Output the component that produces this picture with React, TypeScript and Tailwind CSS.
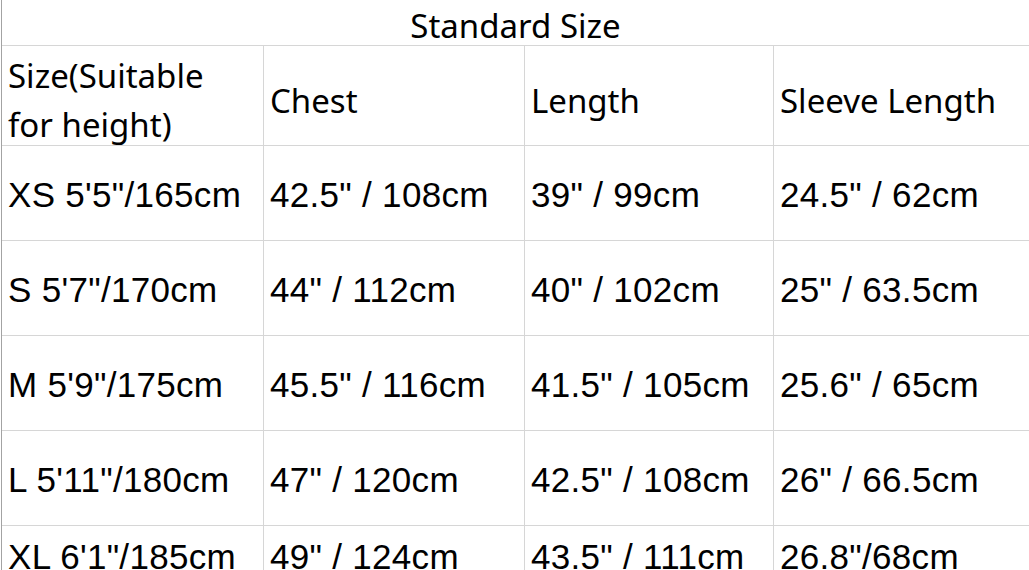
import React from 'react';

const headers = ['Chest', 'Length', 'Sleeve Length'];

const rows: string[][] = [
  ['XS 5\'5"/165cm', '42.5" / 108cm', '39" / 99cm', '24.5" / 62cm'],
  ['S 5\'7"/170cm', '44" / 112cm', '40" / 102cm', '25" / 63.5cm'],
  ['M 5\'9"/175cm', '45.5" / 116cm', '41.5" / 105cm', '25.6" / 65cm'],
  ['L 5\'11"/180cm', '47" / 120cm', '42.5" / 108cm', '26" / 66.5cm'],
  ['XL 6\'1"/185cm', '49" / 124cm', '43.5" / 111cm', '26.8"/68cm'],
];

const headFont = { fontFamily: '"Noto Sans", "Open Sans", sans-serif' };
const bodyFont = { fontFamily: '"Liberation Sans", Arial, sans-serif' };

export default function App() {
  return (
    <div className="w-[1029px] h-[570px] overflow-hidden bg-white">
      <div className="ml-px border-l border-[#a3a3a3] text-black">
        {/* title */}
        <div
          className="h-[45px] flex items-center justify-center text-[33px] leading-none pt-[5px]"
          style={headFont}
        >
          Standard Size
        </div>

        {/* header row */}
        <div className="grid grid-cols-[261px_261px_249px_1fr] h-[100px] border-t border-[#d6d6d6]">
          <div className="flex items-center pt-[5px] pl-[6px] text-[33px] leading-[49px]" style={headFont}>
            <span>
              Size(Suitable
              <br />
              for height)
            </span>
          </div>
          {headers.map((h) => (
            <div
              key={h}
              className="flex items-center pt-[6px] pl-[6px] border-l border-[#d6d6d6] text-[33px]"
              style={headFont}
            >
              {h}
            </div>
          ))}
        </div>

        {/* size rows */}
        {rows.map((r, i) => (
          <div
            key={r[0]}
            className={`grid grid-cols-[261px_261px_249px_1fr] border-t border-[#d6d6d6] ${
              i === rows.length - 1 ? 'h-[52px]' : 'h-[95px]'
            }`}
          >
            {r.map((c, j) => (
              <div
                key={j}
                className={`flex items-center pt-[5px] pl-[6px] text-[35px] tracking-[0.3px] whitespace-nowrap ${
                  j > 0 ? 'border-l border-[#d6d6d6]' : ''
                }`}
                style={bodyFont}
              >
                {c}
              </div>
            ))}
          </div>
        ))}
      </div>
    </div>
  );
}
